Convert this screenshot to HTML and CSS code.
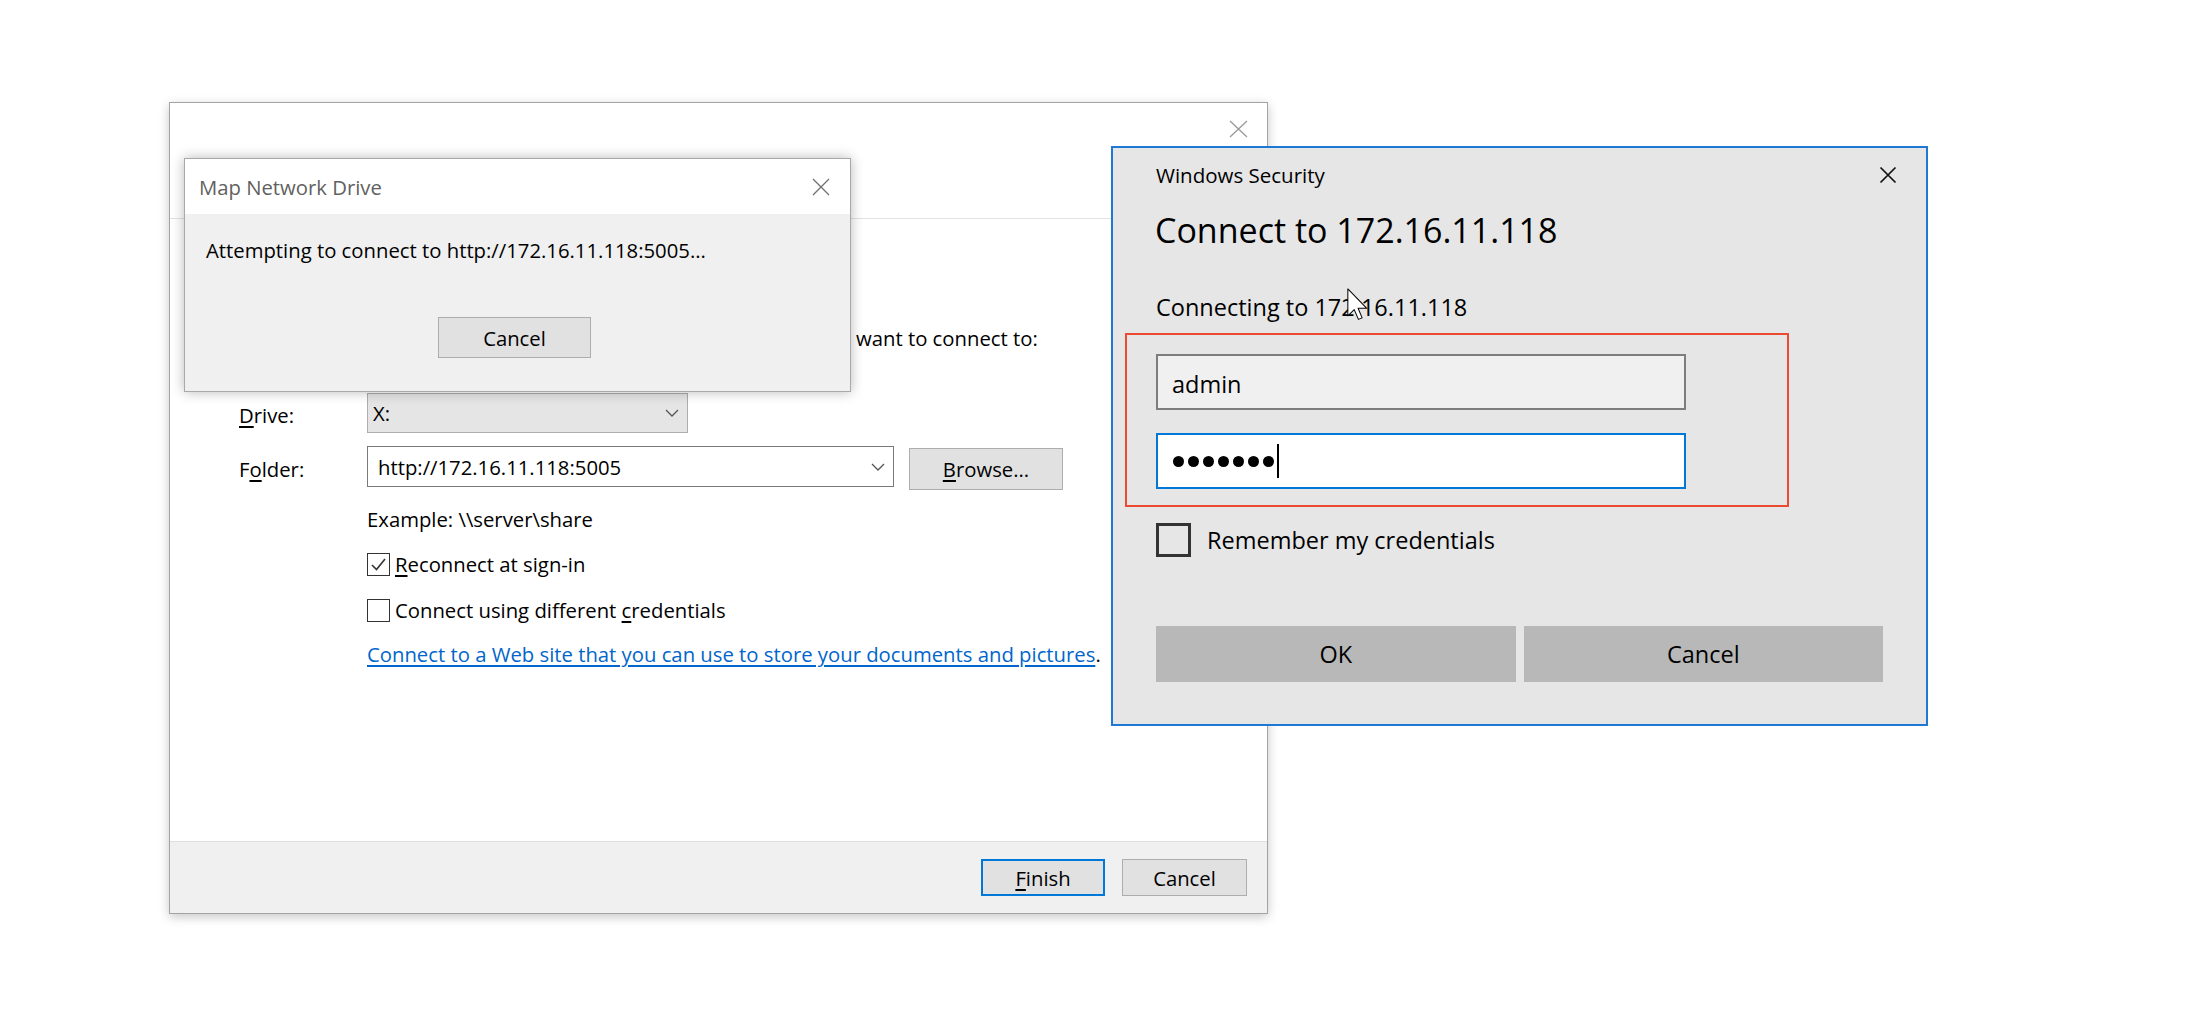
FILE: index.html
```html
<!DOCTYPE html>
<html lang="en">
<head>
<meta charset="utf-8">
<title>Map Network Drive</title>
<link rel="stylesheet" href="styles.css">
</head>
<body>
<div class="desk">
  <section class="win wizard">
    <header class="wiz-head">
      <svg class="x-light" viewBox="0 0 19 18"><path d="M1 1L18 17M18 1L1 17" stroke="#9a9a9a" stroke-width="1.3" fill="none"/></svg>
    </header>
    <div class="wiz-body">
      <p class="wiz-desc">want to connect to:</p>
      <div class="row-drive">
        <span class="lbl lbl-drive"><u>D</u>rive:</span>
        <div class="select"><span>X:</span><svg class="chev" viewBox="0 0 14 8"><polyline points="1,1 7,7 13,1" fill="none" stroke="#555" stroke-width="1.3"/></svg></div>
      </div>
      <div class="row-folder">
        <span class="lbl lbl-folder">F<u>o</u>lder:</span>
        <div class="combo"><span>http://172.16.11.118:5005</span><svg class="chev" viewBox="0 0 14 8"><polyline points="1,1 7,7 13,1" fill="none" stroke="#555" stroke-width="1.3"/></svg></div>
        <button class="btn btn-browse"><span><u>B</u>rowse...</span></button>
      </div>
      <div class="indent">
        <p class="example">Example: \\server\share</p>
        <div class="check check-first">
          <span class="box"><svg class="tick" viewBox="0 0 21 21"><path d="M4 11 L8.5 15.5 L17 5" fill="none" stroke="#333" stroke-width="1.6"/></svg></span>
          <span><u>R</u>econnect at sign-in</span>
        </div>
        <div class="check check-second">
          <span class="box"></span>
          <span>Connect using different <u>c</u>redentials</span>
        </div>
        <p class="link-line"><span class="link">Connect to a Web site that you can use to store your documents and pictures</span>.</p>
      </div>
    </div>
    <footer class="wiz-foot">
      <button class="btn btn-finish"><span><u>F</u>inish</span></button>
      <button class="btn btn-cancel-f"><span>Cancel</span></button>
    </footer>
  </section>

  <section class="win progress">
    <header class="prog-head">
      <span>Map Network Drive</span>
      <svg class="x-prog" viewBox="0 0 18 18"><path d="M1 1L17 17M17 1L1 17" stroke="#707070" stroke-width="1.3" fill="none"/></svg>
    </header>
    <div class="prog-body">
      <p class="prog-msg">Attempting to connect to http://172.16.11.118:5005...</p>
      <button class="btn prog-cancel"><span>Cancel</span></button>
    </div>
  </section>

  <section class="win security">
    <header class="sec-head">
      <span>Windows Security</span>
      <svg class="x-sec" viewBox="0 0 18 18"><path d="M1.5 1.5L16.5 16.5M16.5 1.5L1.5 16.5" stroke="#111" stroke-width="1.7" fill="none"/></svg>
    </header>
    <h2 class="sec-title">Connect to 172.16.11.118</h2>
    <p class="sec-sub">Connecting to 172.16.11.118</p>
    <div class="field user">admin</div>
    <div class="field pass">
      <span class="dot"></span><span class="dot"></span><span class="dot"></span><span class="dot"></span><span class="dot"></span><span class="dot"></span><span class="dot"></span><span class="caret"></span>
    </div>
    <div class="remember">
      <span class="sbox"></span>
      <span>Remember my credentials</span>
    </div>
    <div class="sec-btns">
      <button class="sbtn">OK</button>
      <button class="sbtn">Cancel</button>
    </div>
    <div class="highlight"></div>
  </section>

  <svg class="cursor" viewBox="0 0 12.5 19.5"><path d="M0.5 0.5 V16.5 L4.3 12.8 L6.8 18.6 L9 17.7 L6.6 12 H11.8 Z" fill="#fff" stroke="#000" stroke-width="0.6" stroke-linejoin="round"/></svg>
</div>
</body>
</html>
```

FILE: styles.css
```css
html, body {
  margin: 0;
  padding: 0;
  background: #ffffff;
}

body {
  font-family: "Open Sans", "Noto Sans", sans-serif;
  color: #000;
}

.desk {
  position: relative;
  width: 2191px;
  height: 1022px;
  overflow: hidden;
  background: #ffffff;
}

.win {
  position: absolute;
  box-sizing: border-box;
}

u {
  text-decoration: underline;
  text-underline-offset: 3px;
}

/* ---------- Wizard (back window) ---------- */
.wizard {
  left: 169px;
  top: 102px;
  width: 1099px;
  height: 812px;
  border: 1px solid #a3a3a3;
  background: #ffffff;
  box-shadow: 0 3px 10px rgba(0, 0, 0, 0.22);
  display: flex;
  flex-direction: column;
  font-size: 20.3px;
  line-height: 28px;
}

.wiz-head {
  flex: none;
  height: 116px;
  box-sizing: border-box;
  border-bottom: 1px solid #e3e3e3;
  display: flex;
  justify-content: flex-end;
  align-items: flex-start;
  padding: 17px 19px 0 0;
}

.x-light {
  width: 19px;
  height: 18px;
}

.wiz-body {
  flex: 1;
  padding-left: 69px;
}

.wiz-desc {
  margin: 105px 0 0 617px;
  white-space: nowrap;
}

.row-drive {
  margin-top: 41px;
  height: 40px;
  display: flex;
  align-items: center;
}

.lbl {
  flex: none;
  width: 128px;
}

.lbl-drive {
  padding-top: 4px;
}

.lbl-folder {
  padding-top: 9px;
}

.select {
  width: 321px;
  height: 40px;
  box-sizing: border-box;
  border: 1px solid #adadad;
  background: #e5e5e5;
  display: flex;
  align-items: center;
  justify-content: space-between;
  padding: 0 8px 0 5px;
}

.chev {
  width: 14px;
  height: 8px;
}

.row-folder {
  margin-top: 13px;
  display: flex;
  align-items: flex-start;
}

.combo {
  width: 527px;
  height: 41px;
  box-sizing: border-box;
  border: 1px solid #7a7a7a;
  background: #ffffff;
  display: flex;
  align-items: center;
  justify-content: space-between;
  padding: 0 8px 0 10px;
}

.btn {
  box-sizing: border-box;
  border: 1px solid #adadad;
  background: #e1e1e1;
  font: inherit;
  color: #000;
  padding: 0;
  margin: 0;
  display: flex;
  align-items: center;
  justify-content: center;
}

.btn-browse {
  margin: 2px 0 0 15px;
  width: 154px;
  height: 42px;
}

.indent {
  margin-left: 128px;
}

.example {
  margin: 15px 0 0;
}

.check {
  display: flex;
  align-items: center;
  gap: 5px;
}

.check-first {
  margin-top: 17px;
}

.check-second {
  margin-top: 18px;
}

.box {
  flex: none;
  width: 23px;
  height: 23px;
  box-sizing: border-box;
  border: 1px solid #333333;
  background: #ffffff;
  display: flex;
  align-items: center;
  justify-content: center;
}

.tick {
  width: 21px;
  height: 21px;
}

.link-line {
  margin: 16px 0 0;
}

.link {
  color: #0066cc;
  text-decoration: underline;
  text-underline-offset: 3px;
}

.wiz-foot {
  flex: none;
  height: 72px;
  box-sizing: border-box;
  border-top: 1px solid #dfdfdf;
  background: #f0f0f0;
  display: flex;
  justify-content: flex-end;
  align-items: center;
  gap: 17px;
  padding-right: 20px;
}

.btn-finish {
  width: 124px;
  height: 37px;
  border: 2px solid #0078d7;
}

.btn-cancel-f {
  width: 125px;
  height: 37px;
}

/* ---------- Progress popup ---------- */
.progress {
  left: 184px;
  top: 158px;
  width: 667px;
  height: 234px;
  border: 1px solid #a9a9a9;
  background: #f0f0f0;
  box-shadow: 0 0 12px rgba(0, 0, 0, 0.28);
  display: flex;
  flex-direction: column;
  font-size: 20.3px;
  line-height: 28px;
}

.prog-head {
  flex: none;
  height: 55px;
  background: #ffffff;
  display: flex;
  align-items: center;
  justify-content: space-between;
  padding: 0 20px 0 14px;
  color: #616161;
}

.x-prog {
  width: 18px;
  height: 18px;
}

.prog-body {
  padding: 22px 0 0 21px;
}

.prog-msg {
  margin: 0;
}

.prog-cancel {
  margin: 53px 0 0 232px;
  width: 153px;
  height: 41px;
}

/* ---------- Windows Security ---------- */
.security {
  left: 1111px;
  top: 146px;
  width: 817px;
  height: 580px;
  border: 2px solid #1d79d3;
  background: #e6e6e6;
  padding: 13px 43px 0 43px;
  display: flex;
  flex-direction: column;
}

.sec-head {
  display: flex;
  justify-content: space-between;
  align-items: center;
  margin-right: -14px;
  font-size: 20.5px;
  line-height: 28px;
}

.x-sec {
  width: 18px;
  height: 18px;
}

.sec-title {
  margin: 19px 0 0 -1px;
  font-size: 34px;
  line-height: 44px;
  font-weight: normal;
}

.sec-sub {
  margin: 39px 0 0;
  font-size: 23.5px;
  line-height: 32px;
}

.field {
  width: 530px;
  height: 56px;
  box-sizing: border-box;
  border: 2px solid #7d7d7d;
  background: #f0f0f0;
  display: flex;
  align-items: center;
  padding-left: 14px;
  font-size: 23.5px;
  line-height: 32px;
}

.user {
  margin-top: 31px;
  padding-top: 3px;
}

.pass {
  margin-top: 23px;
  border-color: #0078d7;
  background: #ffffff;
  padding-left: 15px;
  gap: 4px;
}

.dot {
  flex: none;
  width: 11px;
  height: 11px;
  border-radius: 50%;
  background: #000;
}

.caret {
  flex: none;
  width: 2px;
  height: 34px;
  margin-left: -1px;
  background: #000;
}

.remember {
  margin-top: 34px;
  display: flex;
  align-items: center;
  gap: 16px;
  font-size: 23.5px;
  line-height: 32px;
}

.sbox {
  flex: none;
  width: 35px;
  height: 34px;
  box-sizing: border-box;
  border: 3px solid #333333;
}

.sec-btns {
  margin-top: 69px;
  display: flex;
  gap: 8px;
}

.sbtn {
  flex: 1;
  height: 56px;
  border: none;
  margin: 0;
  padding: 0;
  background: #b8b8b8;
  font: inherit;
  font-size: 23.5px;
  color: #000;
}

.highlight {
  position: absolute;
  left: 12px;
  top: 185px;
  width: 664px;
  height: 174px;
  box-sizing: border-box;
  border: 2px solid #ec4a32;
  pointer-events: none;
}

.cursor {
  position: absolute;
  left: 1347px;
  top: 288px;
  width: 21px;
  height: 33px;
}
```
